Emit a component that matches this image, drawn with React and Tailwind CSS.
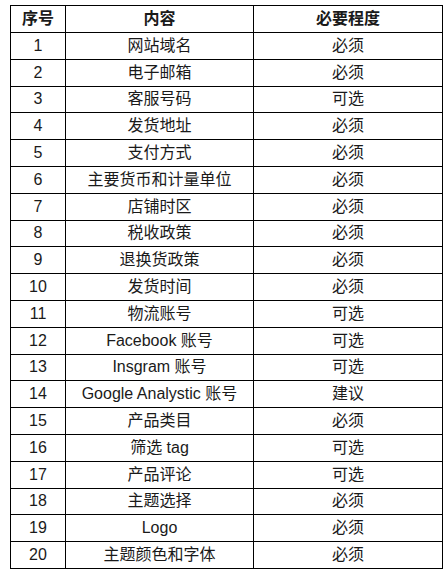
const rows = [
  ['1', '网站域名', '必须'],
  ['2', '电子邮箱', '必须'],
  ['3', '客服号码', '可选'],
  ['4', '发货地址', '必须'],
  ['5', '支付方式', '必须'],
  ['6', '主要货币和计量单位', '必须'],
  ['7', '店铺时区', '必须'],
  ['8', '税收政策', '必须'],
  ['9', '退换货政策', '必须'],
  ['10', '发货时间', '必须'],
  ['11', '物流账号', '可选'],
  ['12', 'Facebook 账号', '可选'],
  ['13', 'Insgram 账号', '可选'],
  ['14', 'Google Analystic 账号', '建议'],
  ['15', '产品类目', '必须'],
  ['16', '筛选 tag', '可选'],
  ['17', '产品评论', '可选'],
  ['18', '主题选择', '必须'],
  ['19', 'Logo', '必须'],
  ['20', '主题颜色和字体', '必须'],
];

export default function App() {
  return (
    <div className="bg-white w-[446px] h-[571px] pt-[5px] pl-[10px] font-['Liberation_Sans','Noto_Sans_CJK_SC',sans-serif] text-[16px] text-[#1a1a1a]">
      <table className="w-[432px] border-collapse table-fixed">
        <colgroup>
          <col className="w-[55px]" />
          <col className="w-[188px]" />
          <col className="w-[189px]" />
        </colgroup>
        <thead>
          <tr className="h-[27px]">
            <th className="border border-black font-bold p-0 leading-none">序号</th>
            <th className="border border-black font-bold p-0 leading-none">内容</th>
            <th className="border border-black font-bold p-0 leading-none">必要程度</th>
          </tr>
        </thead>
        <tbody>
          {rows.map((r) => (
            <tr key={r[0]} className="h-[26.8px]">
              <td className="border border-black text-center p-0 leading-none">{r[0]}</td>
              <td className="border border-black text-center p-0 leading-none">{r[1]}</td>
              <td className="border border-black text-center p-0 leading-none">{r[2]}</td>
            </tr>
          ))}
        </tbody>
      </table>
    </div>
  );
}
